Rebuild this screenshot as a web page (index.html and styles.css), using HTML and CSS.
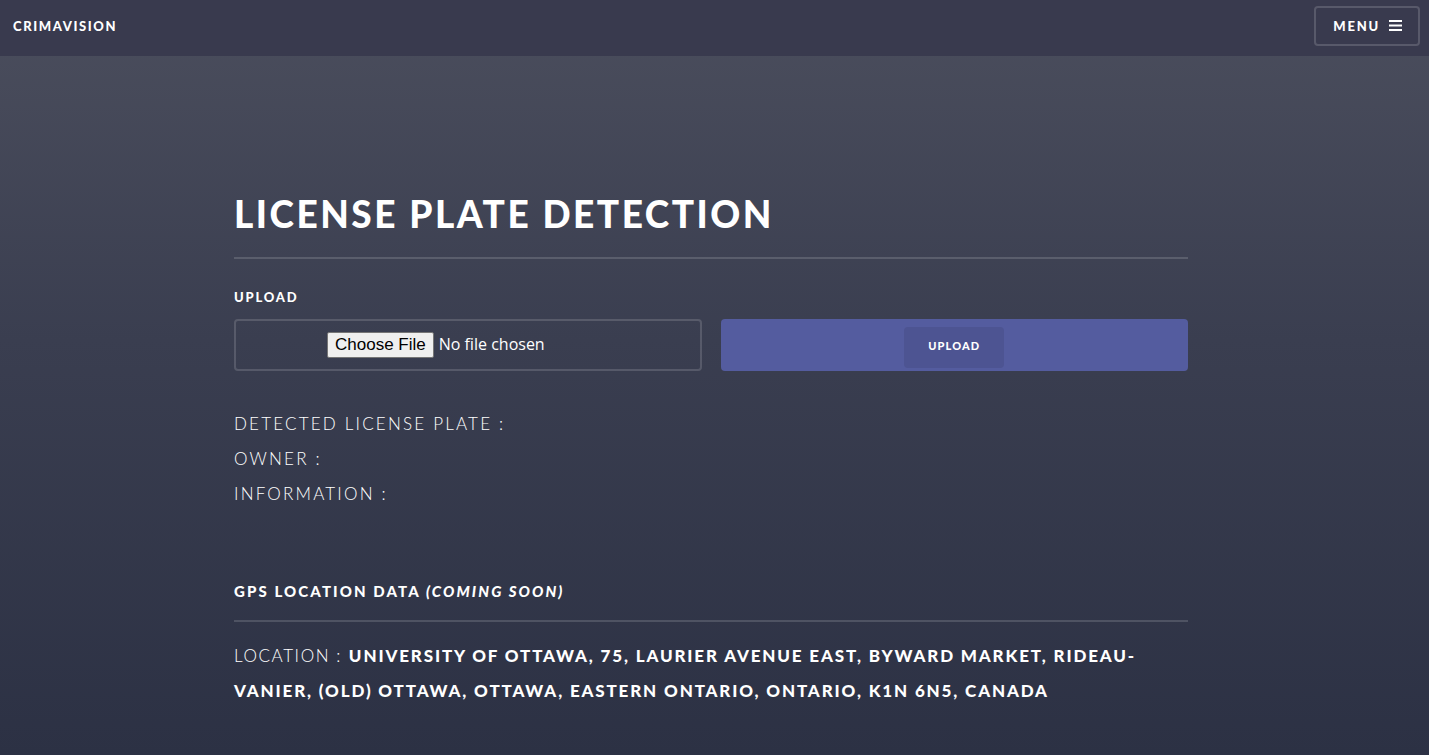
FILE: index.html
```html
<!DOCTYPE html>
<html lang="en">
<head>
<meta charset="utf-8">
<title>Crimavision</title>
<link rel="stylesheet" href="styles.css">
</head>
<body>
<header class="topbar">
  <a class="logo" href="#">CRIMAVISION</a>
  <a class="menu-btn" href="#">MENU
    <svg class="menu-icon" width="13" height="11" viewBox="0 0 13 11"><rect x="0" y="0" width="13" height="2" fill="#fff"/><rect x="0" y="4.5" width="13" height="2" fill="#fff"/><rect x="0" y="9" width="13" height="2" fill="#fff"/></svg>
  </a>
</header>
<main class="main">
  <section class="inner">
    <h1 class="title">LICENSE PLATE DETECTION</h1>
    <hr class="rule">
    <h3 class="label">UPLOAD</h3>
    <form class="upload-row">
      <div class="file-box"><input type="file" class="file-input"></div>
      <div class="submit-box"><button type="button" class="submit-btn">UPLOAD</button></div>
    </form>
    <div class="results">
      <p class="line">DETECTED LICENSE PLATE :</p>
      <p class="line">OWNER :</p>
      <p class="line">INFORMATION :</p>
    </div>
    <h3 class="label gps">GPS LOCATION DATA <em>(COMING SOON)</em></h3>
    <hr class="rule rule-gps">
    <p class="line location"><span class="loc-key">LOCATION :</span> <strong>UNIVERSITY OF OTTAWA, 75, LAURIER AVENUE EAST, BYWARD MARKET, RIDEAU-VANIER, (OLD) OTTAWA, OTTAWA, EASTERN ONTARIO, ONTARIO, K1N 6N5, CANADA</strong></p>
  </section>
</main>
</body>
</html>
```
FILE: styles.css
```css
html, body {
  margin: 0;
  padding: 0;
}
body {
  min-height: 755px;
  background: linear-gradient(180deg, #4b4e5d 0%, #3a3e50 45%, #2c3144 100%);
  color: #fff;
  font-family: Lato, "Open Sans", sans-serif;
}
.topbar {
  height: 56px;
  background: #393a4e;
  display: flex;
  align-items: center;
  justify-content: space-between;
  padding: 0 9px 0 13px;
}
.logo {
  color: #fff;
  text-decoration: none;
  font-weight: 900;
  font-size: 13px;
  letter-spacing: 1.6px;
  margin-top: -4px;
}
.menu-btn {
  display: flex;
  align-items: center;
  gap: 9px;
  height: 36px;
  padding: 0 16px 0 17px;
  border: 2px solid rgba(255,255,255,0.16);
  border-radius: 4px;
  color: #fff;
  text-decoration: none;
  font-weight: 900;
  font-size: 13px;
  letter-spacing: 1.8px;
  margin-top: -5px;
}
.inner {
  width: 954px;
  margin: 0 0 0 234px;
  padding-top: 138px;
}
.title {
  margin: 0;
  font-size: 37px;
  font-weight: 900;
  letter-spacing: 2.5px;
  line-height: 40px;
}
.rule {
  border: 0;
  height: 2px;
  background: rgba(255,255,255,0.15);
  margin: 23px 0 0;
}
.label {
  margin: 30px 0 0;
  font-size: 13px;
  font-weight: 900;
  letter-spacing: 1.8px;
  line-height: 16px;
}
.upload-row {
  display: grid;
  grid-template-columns: 1fr 1fr;
  gap: 19px;
  margin-top: 14px;
}
.file-box {
  height: 52px;
  box-sizing: border-box;
  border: 2px solid rgba(255,255,255,0.15);
  border-radius: 4px;
  display: flex;
  align-items: center;
  padding-left: 91px;
}
.file-input {
  color: #fff;
  font-family: "Open Sans", sans-serif;
  font-size: 16px;
}
.file-input::file-selector-button {
  font-family: "Liberation Sans", Arial, sans-serif;
  font-size: 17px;
  color: #000;
  background: #efefef;
  border: 1px solid #767676;
  border-radius: 2px;
  padding: 2px 7px;
  margin-right: 5px;
}
.submit-box {
  height: 52px;
  background: #545c9f;
  border-radius: 4px;
  display: flex;
  justify-content: center;
  align-items: flex-end;
  padding-bottom: 3px;
  box-sizing: border-box;
}
.submit-btn {
  width: 100px;
  height: 41px;
  border: 0;
  border-radius: 4px;
  background: #4d5492;
  color: #fff;
  font-family: Lato, sans-serif;
  font-weight: 900;
  font-size: 11px;
  letter-spacing: 1.1px;
  padding: 0 0 4px;
  cursor: pointer;
}
.results {
  margin-top: 35px;
}
.line {
  margin: 0;
  font-size: 17px;
  font-weight: 300;
  letter-spacing: 2.2px;
  line-height: 35px;
}
.gps {
  margin-top: 71px;
  font-size: 15px;
  letter-spacing: 2.1px;
  line-height: 18px;
}
.gps em {
  font-style: italic;
}
.rule-gps {
  margin-top: 20px;
}
.location {
  margin-top: 16px;
}
.loc-key {
  letter-spacing: 1.6px;
}
.location strong {
  font-weight: 900;
  letter-spacing: 1.85px;
}
```
